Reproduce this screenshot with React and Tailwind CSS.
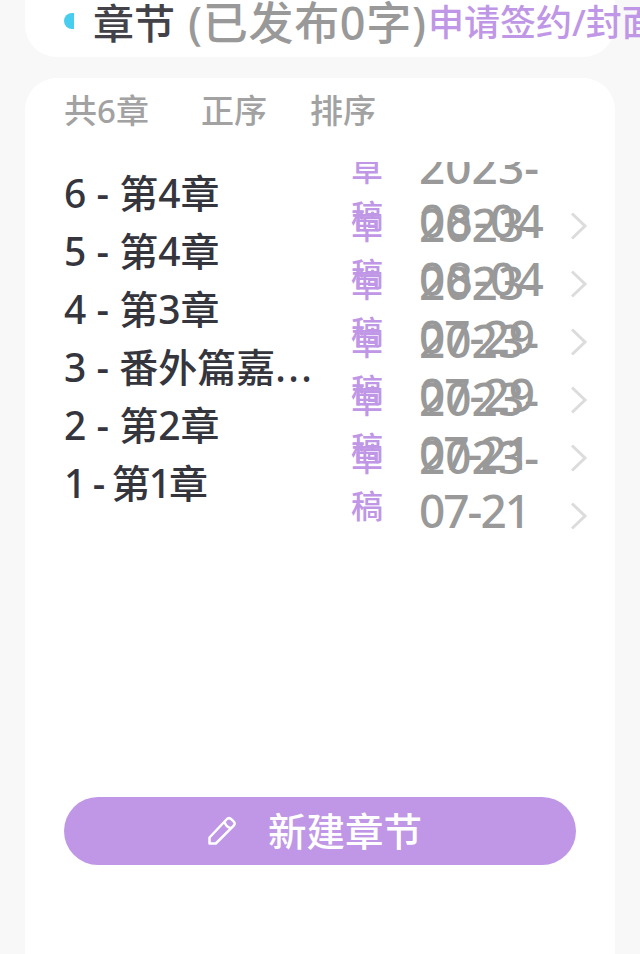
import React from 'react';

const chapters = [
  { id: 6, title: '第4章', year: '2023-', day: '08-04', daySpacing: 'tracking-[1.2px]' },
  { id: 5, title: '第4章', year: '2023-', day: '08-04', daySpacing: 'tracking-[1.2px]' },
  { id: 4, title: '第3章', year: '2023-', day: '07-29', daySpacing: 'tracking-[-1px]' },
  { id: 3, title: '番外篇嘉', clipped: true, year: '2023-', day: '07-29', daySpacing: 'tracking-[-1px]' },
  { id: 2, title: '第2章', year: '2023-', day: '07-21', daySpacing: 'tracking-[-2px]' },
  { id: 1, title: '第1章', narrow: true, year: '2023-', day: '07-21', daySpacing: 'tracking-[-2px]' },
];

const ChapterRow = ({ chapter }) => (
  <div className="flex h-[58px] items-center whitespace-nowrap">
    <div className={`w-[287px] shrink-0 text-[39px] leading-[58px] text-[#35353d] ${chapter.narrow ? 'tracking-[-1.9px]' : ''}`}>
      {chapter.id} - {chapter.title}
      {chapter.clipped && <span className="tracking-[2.4px]">...</span>}
    </div>
    <div className="-mt-[2px] w-[68px] shrink-0 text-[32px] leading-[47px] text-[#bf97e6]">
      <div>草</div>
      <div>稿</div>
    </div>
    <div className="w-[151px] shrink-0 text-[46px] leading-[54px] text-[#999999]">
      <div>{chapter.year}</div>
      <div className={chapter.daySpacing}>{chapter.day}</div>
    </div>
    <svg className="mt-[66px] h-[28px] w-[18px] shrink-0" viewBox="0 0 18 28" fill="none" stroke="#dcdcdc" strokeWidth="3">
      <path d="M2 1.5 L15 14 L2 26.5" />
    </svg>
  </div>
);

const App = () => {
  return (
    <div className="flex h-[954px] w-[640px] flex-col overflow-hidden bg-[#f8f8f8] font-['Noto_Sans','Noto_Sans_CJK_SC',sans-serif] font-medium">
      {/* Chapter header */}
      <div className="ml-[25px] flex h-[57px] w-[590px] shrink-0 items-start rounded-b-[32px] bg-white pl-[39px] whitespace-nowrap">
        <div className="mt-[13px] h-4 w-[10px] shrink-0 rounded-l-full bg-[#49cdee]"></div>
        <div className="ml-[19px] w-[95px] shrink-0 text-[41px] leading-[46px] text-[#424248]">章节</div>
        <div className="w-[240px] shrink-0 text-[45px] leading-[46px] tracking-[0.7px] text-[#999999]">(已发布0字)</div>
        <div className="text-[36px] leading-[46px] text-[#bf97e6]">申请签约/封面</div>
      </div>

      {/* Chapter list */}
      <div className="mt-[21px] ml-[25px] flex w-[590px] grow flex-col rounded-t-[32px] bg-white px-[39px]">
        <div className="flex h-[84px] items-start pt-[9px] text-[33px] leading-[48px] whitespace-nowrap text-[#a2a2a2]">
          <div className="w-[137px]">共6章</div>
          <div className="w-[109px]">正序</div>
          <div>排序</div>
        </div>
        <div className="-mr-[39px] h-[635px] overflow-hidden pt-[2px]">
          {chapters.map((chapter) => (
            <ChapterRow key={chapter.id} chapter={chapter} />
          ))}
        </div>

        {/* New chapter button */}
        <button className="flex h-[68px] w-[512px] shrink-0 items-center rounded-full bg-[#bf97e6] pl-[143px] text-white">
          <svg className="h-[30px] w-[30px]" viewBox="0 0 30 30" fill="none" stroke="white" strokeWidth="2.5" strokeLinejoin="round">
            <path d="M2.5 27.5 V21.5 L19.5 3.5 Q21.8 1 24.2 3.2 L26.6 5.4 Q28.8 7.6 26.5 9.8 L8.8 27.5 Z" />
            <path d="M17.5 5.8 Q18.5 10.5 24 12.3" />
          </svg>
          <span className="ml-[31px] text-[38.5px] leading-[66px]">新建章节</span>
        </button>
      </div>
    </div>
  );
};

export default App;
